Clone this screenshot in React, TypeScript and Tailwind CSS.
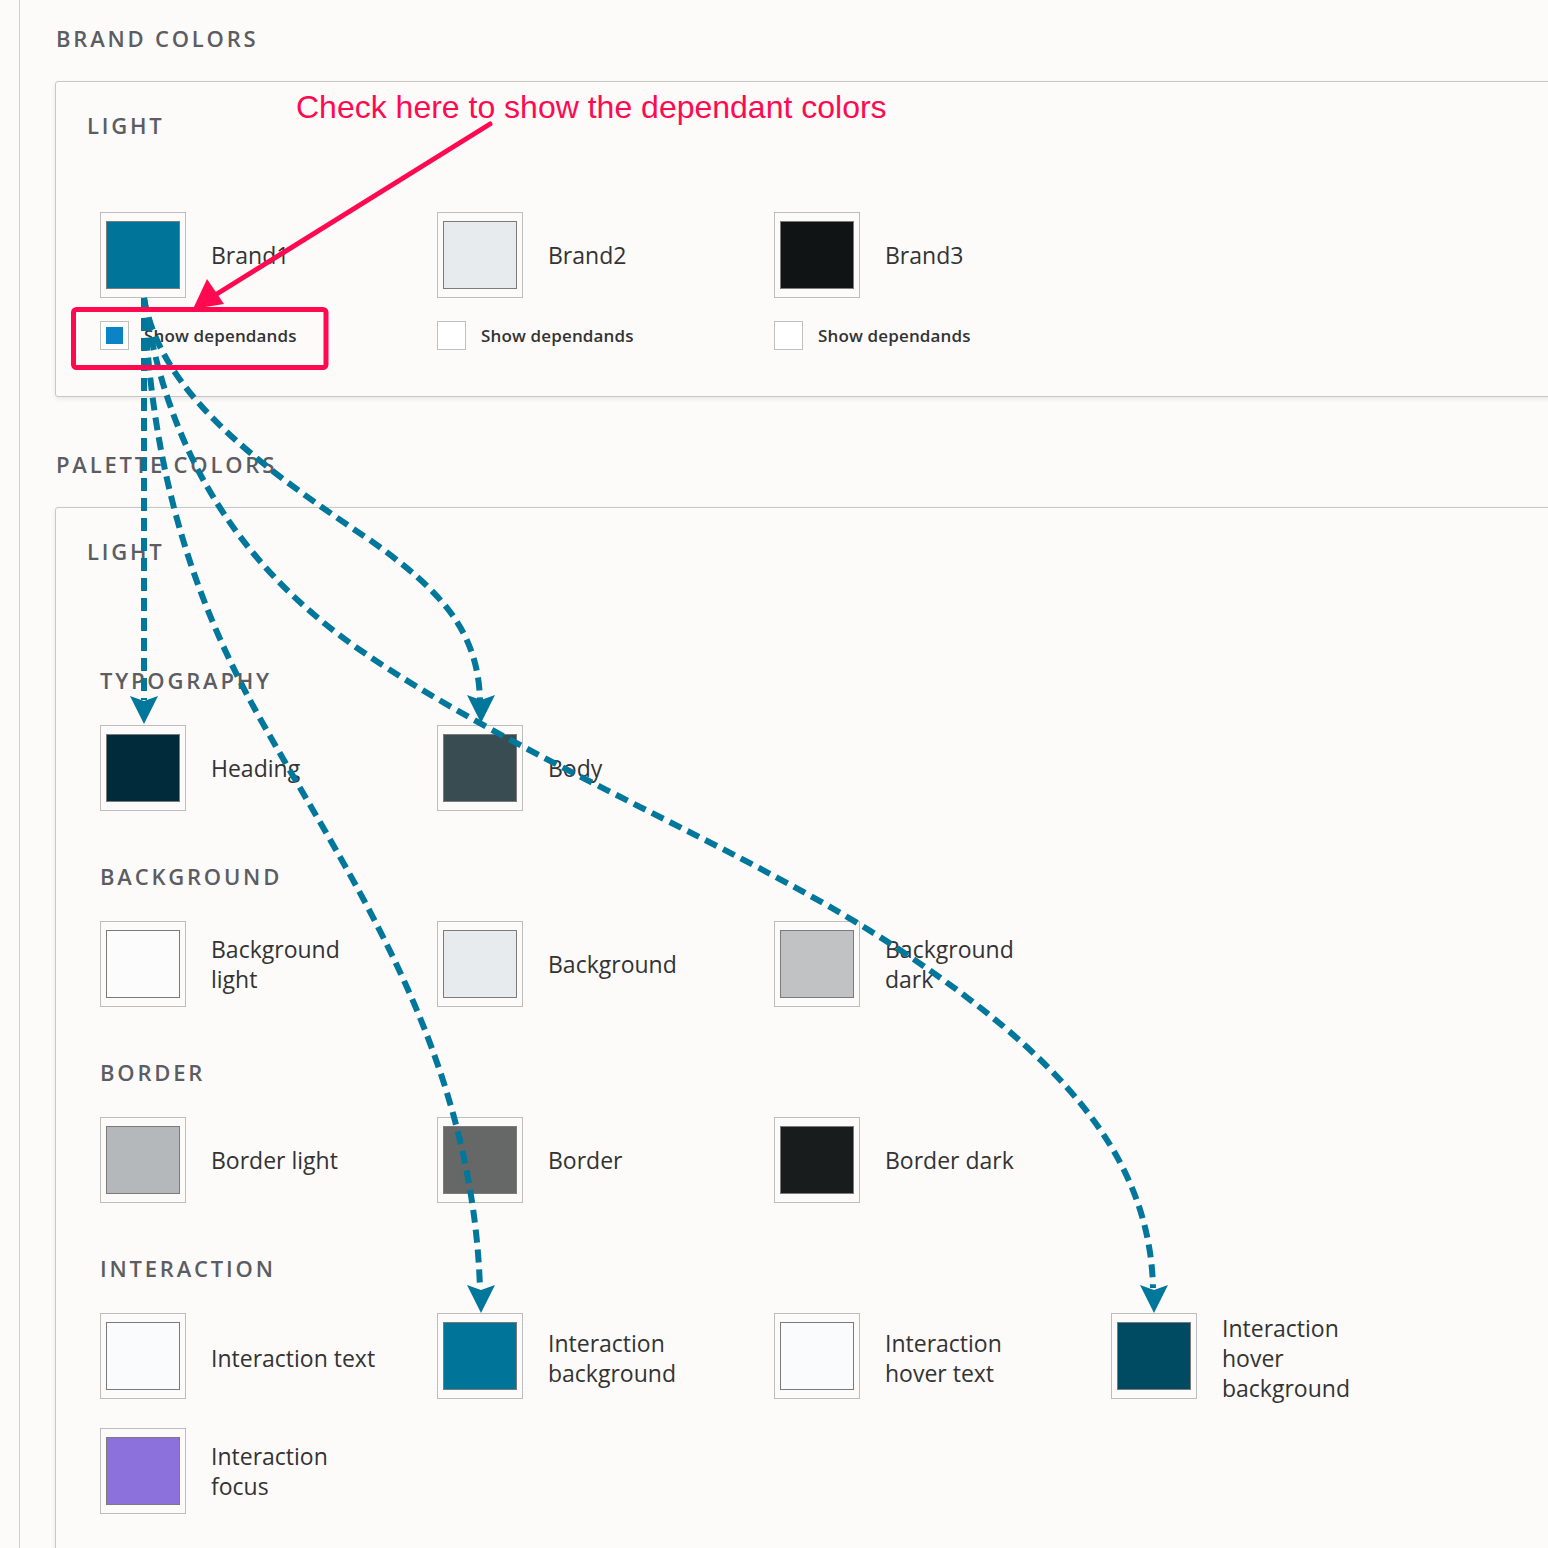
import React from "react";

type Swatch = { name: string; color: string };

const BRAND: Swatch[] = [
  { name: "Brand1", color: "#00759a" },
  { name: "Brand2", color: "#e8ebee" },
  { name: "Brand3", color: "#111415" },
];

const GROUPS: { title: string; items: Swatch[] }[] = [
  {
    title: "Typography",
    items: [
      { name: "Heading", color: "#012b3b" },
      { name: "Body", color: "#394c51" },
    ],
  },
  {
    title: "Background",
    items: [
      { name: "Background light", color: "#fcfcfc" },
      { name: "Background", color: "#e8ebee" },
      { name: "Background dark", color: "#c1c2c3" },
    ],
  },
  {
    title: "Border",
    items: [
      { name: "Border light", color: "#b5b8ba" },
      { name: "Border", color: "#666767" },
      { name: "Border dark", color: "#191c1d" },
    ],
  },
  {
    title: "Interaction",
    items: [
      { name: "Interaction text", color: "#fafbfc" },
      { name: "Interaction background", color: "#00759a" },
      { name: "Interaction hover text", color: "#fafbfc" },
      { name: "Interaction hover background", color: "#004b61" },
      { name: "Interaction focus", color: "#8c71dd" },
    ],
  },
];

const font = { fontFamily: '"Open Sans", "Noto Sans", sans-serif' };

function Heading({ children, className = "" }: { children: React.ReactNode; className?: string }) {
  return (
    <div className={"text-[22px] leading-[30px] font-semibold uppercase tracking-[2.8px] text-[#5c5d63] " + className}>
      {children}
    </div>
  );
}

function ColorBox({ color }: { color: string }) {
  return (
    <div className="w-[86px] h-[86px] shrink-0 self-start border border-[#bdbdbd] px-[5px] py-[8px]">
      <div className="w-full h-full border border-[#7b7b7b]" style={{ backgroundColor: color }} />
    </div>
  );
}

function SwatchItem({ s }: { s: Swatch }) {
  return (
    <div className="flex items-center gap-[25px]">
      <ColorBox color={s.color} />
      <div className="w-[172px] text-[23px] leading-[30px] text-[#333]">{s.name}</div>
    </div>
  );
}

function Checkbox({ checked }: { checked?: boolean }) {
  return (
    <div className="w-[29px] h-[29px] border border-[#bfbfbf] bg-white p-[5px]">
      {checked ? <div className="w-[17px] h-[17px] bg-[#0a84c6]" /> : null}
    </div>
  );
}

function Card({ children }: { children: React.ReactNode }) {
  return (
    <div className="w-[1560px] -ml-px border border-[#c7c7c7] rounded-[3px] bg-[#fcfbfa] shadow-[0_2px_5px_rgba(0,0,0,0.08)] pt-[28px]">
      {children}
    </div>
  );
}

function Overlay() {
  const teal = "#00779b";
  const dash = { stroke: teal, strokeWidth: 6, fill: "none", strokeDasharray: "13 7" };
  const head = (x: number, y: number) => `${x - 14},${y - 28} ${x},${y - 23} ${x + 14},${y - 28} ${x},${y}`;
  return (
    <svg className="absolute left-0 top-0 pointer-events-none" width="1548" height="1548" viewBox="0 0 1548 1548">
      <path d="M144 298 L144 700" {...dash} />
      <path d="M144 298 C150 420, 170 560, 262 722 C352 882, 472 1050, 480 1288" {...dash} />
      <path d="M144 298 C160 390, 250 460, 370 540 C440 590, 478 630, 480 700" {...dash} />
      <path d="M144 298 C165 440, 230 560, 360 650 C520 760, 750 850, 900 950 C1050 1050, 1150 1150, 1153 1288" {...dash} />
      <polygon points={head(144, 724)} fill={teal} />
      <polygon points={head(481, 1313)} fill={teal} />
      <polygon points={head(481, 723)} fill={teal} />
      <polygon points={head(1154, 1313)} fill={teal} />

      <rect x="73.5" y="309.5" width="252.5" height="58" rx="3" fill="none" stroke="#ff0a50" strokeWidth="5" />
      <line x1="490" y1="124" x2="212" y2="297" stroke="#ff0a50" strokeWidth="5" strokeLinecap="round" />
      <polygon points="193,309 207,279 224,304" fill="#ff0a50" />
    </svg>
  );
}

export default function App() {
  return (
    <div className="relative w-[1548px] h-[1548px] overflow-hidden bg-[#fcfbfa]" style={font}>
      <div className="flex h-full">
        <div className="w-[20px] shrink-0 border-r border-[#cfcfcf]" />
        <div className="flex-1 pl-[36px] pt-[23px]">
          <Heading>Brand colors</Heading>
          <div className="mt-[28px]">
            <Card>
              <Heading className="pl-[31px]">Light</Heading>
              <div className="mt-[72px] pl-[44px] pb-[46px] grid grid-cols-[337px_337px_337px]">
                {BRAND.map((b, i) => (
                  <div key={b.name} className="flex flex-col gap-[23px]">
                    <SwatchItem s={b} />
                    <div className="flex items-center gap-[15px]">
                      <Checkbox checked={i === 0} />
                      <span className="text-[17px] tracking-[0.15px] font-semibold text-[#333]">Show dependands</span>
                    </div>
                  </div>
                ))}
              </div>
            </Card>
          </div>

          <Heading className="mt-[52px]">Palette colors</Heading>
          <div className="mt-[28px]">
            <Card>
              <Heading className="pl-[31px]">Light</Heading>
              <div className="mt-[99px] pl-[44px] flex flex-col gap-[50px] pb-[40px]">
                {GROUPS.map((g) => (
                  <div key={g.title}>
                    <Heading>{g.title}</Heading>
                    <div className="mt-[30px] grid grid-cols-[337px_337px_337px_337px] gap-y-[25px]">
                      {g.items.map((s) => (
                        <SwatchItem key={s.name} s={s} />
                      ))}
                    </div>
                  </div>
                ))}
              </div>
            </Card>
          </div>
        </div>
      </div>

      <div
        className="absolute left-[296px] top-[88px] text-[32px] leading-[38px] text-[#ff0a50] whitespace-nowrap"
        style={{ fontFamily: '"Liberation Sans", Arial, sans-serif' }}
      >
        Check here to show the dependant colors
      </div>
      <Overlay />
    </div>
  );
}
